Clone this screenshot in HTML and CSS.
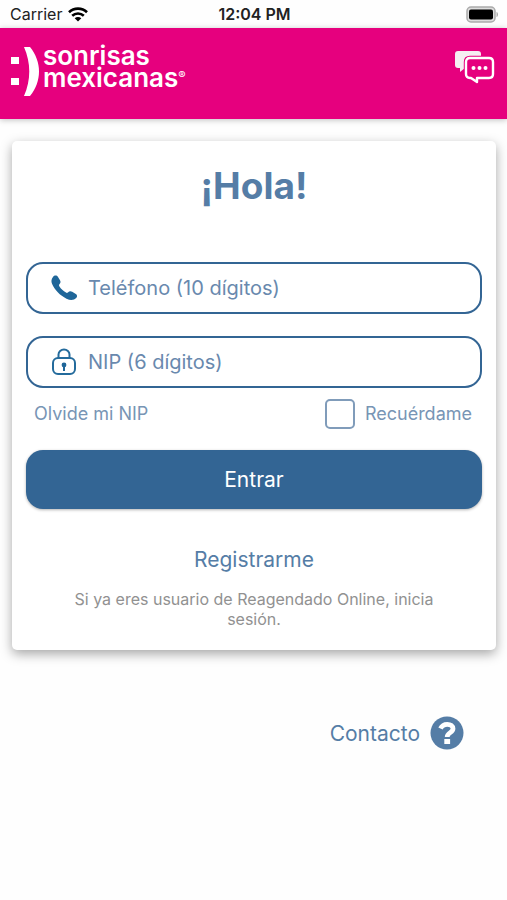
FILE: index.html
```html
<!DOCTYPE html>
<html lang="es">
<head>
<meta charset="utf-8">
<meta name="viewport" content="width=device-width, initial-scale=1">
<title>Sonrisas Mexicanas</title>
<link rel="stylesheet" href="styles.css">
</head>
<body>
<div class="status">
  <div class="status-carrier">
    <span>Carrier</span>
    <svg class="wifi" viewBox="0 0 20 15" aria-hidden="true">
      <g fill="none" stroke="#000" stroke-width="2.6">
        <path d="M1 5.3C6 .4 14 .4 19 5.3"/>
        <path d="M4.2 8.8C7.5 5.7 12.5 5.7 15.8 8.8"/>
      </g>
      <path d="M10 14.6 6.7 11.2C8.5 9.6 11.5 9.6 13.3 11.2Z"/>
    </svg>
  </div>
  <span class="status-time">12:04 PM</span>
  <div class="status-battery">
    <svg class="battery" viewBox="0 0 33 17" aria-hidden="true">
      <rect x="1" y="1" width="28" height="15" rx="4" fill="#ddd" stroke="#aaa" stroke-width="1.5"/>
      <rect x="3" y="3.500" width="24" height="10" rx="2"/>
      <path d="M30.5 6c2 .5 2 4.500 0 5z" fill="#aaa"/>
    </svg>
  </div>
</div>
<header class="header">
  <div class="brand">
    <svg class="brand-face" viewBox="0 0 30 52" aria-hidden="true">
      <path fill="#fff" d="M1 12h8v7H1zM1 33h8v7H1zM14 2h6c12 15 12 34 0 49h-6c7-16 7-33 0-49z"/>
    </svg>
    <div class="brand-name">
      <span>sonrisas</span>
      <span>mexicanas<sup class="brand-mark">®</sup></span>
    </div>
  </div>
  <button class="chat" type="button" aria-label="Chat">
    <svg class="chat-icon" viewBox="0 0 42 34" aria-hidden="true">
      <path fill="#f5eef2" d="M4 1h20q3 0 3 3v14H11l-5 4v-4H4q-3 0-3-3V4q0-3 3-3z"/>
      <path fill="#e6007e" stroke="#e6007e" stroke-width="4.400" stroke-linejoin="round" d="M16 8h19q4 0 4 4v12q0 4-4 4H23v4l-6-4h-1q-4 0-4-4V12q0-4 4-4z"/>
      <path fill="#e6007e" stroke="#fff" stroke-width="2.400" stroke-linejoin="round" d="M16 8h19q4 0 4 4v12q0 4-4 4H23v4l-6-4h-1q-4 0-4-4V12q0-4 4-4z"/>
      <g fill="#fff"><circle cx="19.500" cy="18" r="2"/><circle cx="25.500" cy="18" r="2"/><circle cx="31.500" cy="18" r="2"/></g>
    </svg>
  </button>
</header>
<main class="main">
  <form class="card">
    <h1 class="title">¡Hola!</h1>
    <div class="fields">
      <label class="field">
        <svg class="field-icon" viewBox="0 0 28 28" aria-hidden="true">
          <path fill="#1f6699" d="M3 3C4.500 1 6.800 1.200 8 3L10 6.200C11 7.800 10.500 9.200 9.200 10.500 8.800 11 8.900 11.600 9.300 12.300 11 15 13.300 17.100 16 18.600 16.700 19 17.300 19 17.900 18.400 19.300 17 20.700 16.900 22.200 17.800L25.800 20C27.400 21 27.500 22.700 26.200 24 24 26.200 20.500 26.600 16.500 24.700 10 21.500 4.600 15.900 2 9.800 1 7.200 1.400 4.900 3 3Z"/>
        </svg>
        <input class="field-input" type="tel" placeholder="Teléfono (10 dígitos)" aria-label="Teléfono (10 dígitos)">
      </label>
      <label class="field">
        <svg class="field-icon" viewBox="0 0 28 28" aria-hidden="true">
          <g fill="none" stroke="#246b9c" stroke-width="2">
            <rect x="3" y="10" width="22" height="16" rx="5"/>
            <path d="M8.500 10V6.500a5.500 5 0 0 1 11 0V10"/>
          </g>
          <circle cx="14" cy="17" r="2.400" fill="#1f6699"/>
          <path d="M13 17h2v6h-2z" fill="#1f6699"/>
        </svg>
        <input class="field-input" type="password" placeholder="NIP (6 dígitos)" aria-label="NIP (6 dígitos)">
      </label>
    </div>
    <div class="options">
      <a class="forgot" href="#olvide">Olvide mi NIP</a>
      <label class="remember"><input class="check" type="checkbox"><span>Recuérdame</span></label>
    </div>
    <button class="submit" type="submit">Entrar</button>
    <a class="register" href="#registro">Registrarme</a>
    <p class="note">Si ya eres usuario de Reagendado Online, inicia sesión.</p>
  </form>
  <a class="contact" href="#contacto">
    <span>Contacto</span>
    <svg class="contact-icon" viewBox="0 0 34 34" aria-hidden="true">
      <circle cx="17" cy="17" r="16.500" fill="#557da6"/>
      <path fill="none" stroke="#fff" stroke-width="4.800" d="M10.500 12.500C12 9.300 14.300 8.300 17.300 8.300 20.500 8.300 23 10 23 12.700 23 16.800 17.200 16.500 17.200 21"/>
      <rect x="14.300" y="23" width="5.800" height="5" fill="#fff"/>
    </svg>
  </a>
</main>
</body>
</html>
```
FILE: styles.css
```css
* { box-sizing: border-box; }

body {
  margin: 0;
  min-height: 100vh;
  background: #fefefe;
  color: #557da6;
  font-family: Inter, "Liberation Sans", sans-serif;
}

a { color: inherit; text-decoration: none; }
svg { display: block; }

.status {
  display: grid;
  grid-template-columns: 1fr auto 1fr;
  align-items: center;
  height: 28px;
  padding: 0 8px 0 10px;
  color: #222;
  font-size: 16px;
}
.status-carrier { display: flex; align-items: center; gap: 6px; }
.wifi { width: 20px; height: 15px; }
.status-time { font-weight: 600; }
.status-battery { display: flex; justify-content: flex-end; }
.battery { width: 33px; height: 17px; }

.header {
  display: flex;
  justify-content: space-between;
  align-items: flex-start;
  padding: 17px 11px 22px 10px;
  background: #e6007e;
  box-shadow: 0 1px 6px rgba(0, 0, 0, 0.25);
}
.brand { display: flex; gap: 3px; color: #fff; }
.brand-face { width: 30px; height: 52px; }
.brand-name {
  display: flex;
  flex-direction: column;
  font: 600 26px/22px Inter, sans-serif;
}
.brand-mark { font-size: 11px; font-weight: 400; line-height: 0; vertical-align: 8px; }
.chat { margin: 5px 0 0; padding: 0; border: 0; background: none; }
.chat-icon { width: 42px; height: 34px; }

.main { padding: 22px 11px 24px 12px; }
.card {
  display: flex;
  flex-direction: column;
  padding: 23px 14px 21px;
  border-radius: 5px;
  background: #fff;
  box-shadow: 0 4px 12px rgba(0, 0, 0, 0.35);
}
.title {
  margin: 0 0 54px;
  font-size: 37px;
  font-weight: 700;
  line-height: 44px;
  text-align: center;
}
.fields { display: flex; flex-direction: column; gap: 22px; }
.field {
  display: flex;
  align-items: center;
  gap: 10px;
  height: 52px;
  padding: 0 22px;
  border: 2px solid #336594;
  border-radius: 17px;
}
.field-icon { flex: none; width: 28px; height: 28px; }
.field-input {
  flex: 1;
  min-width: 0;
  padding: 0;
  border: 0;
  outline: 0;
  background: none;
  color: #557da6;
  font: 400 20px/28px Inter, sans-serif;
}
.field-input::placeholder { color: #6989ae; opacity: 1; }

.options {
  display: flex;
  justify-content: space-between;
  align-items: center;
  margin: 10px 0 20px;
  padding: 0 10px 0 8px;
  color: #7895b5;
  font-size: 18px;
  line-height: 32px;
}
.remember { display: flex; align-items: center; gap: 10px; }
.check {
  appearance: none;
  width: 30px;
  height: 30px;
  margin: 0;
  border: 2px solid #809cba;
  border-radius: 5px;
  background: #fff;
}
.check:checked { background: #336594; }

.submit {
  height: 59px;
  border: 0;
  border-radius: 17px;
  background: #336594;
  box-shadow: 0 1px 3px rgba(0, 0, 0, 0.3);
  color: #fff;
  font: 400 21px/28px Inter, sans-serif;
}
.register {
  align-self: center;
  margin: 37px 0 15px;
  font-size: 21px;
  line-height: 28px;
}
.note {
  margin: 0;
  padding: 0 40px;
  color: #919191;
  font-size: 16px;
  line-height: 20px;
  text-align: center;
}

.contact {
  display: flex;
  align-items: center;
  gap: 10px;
  width: fit-content;
  margin: 66px 32px 0 auto;
  font-size: 21px;
}
.contact-icon { width: 34px; height: 34px; }
```
